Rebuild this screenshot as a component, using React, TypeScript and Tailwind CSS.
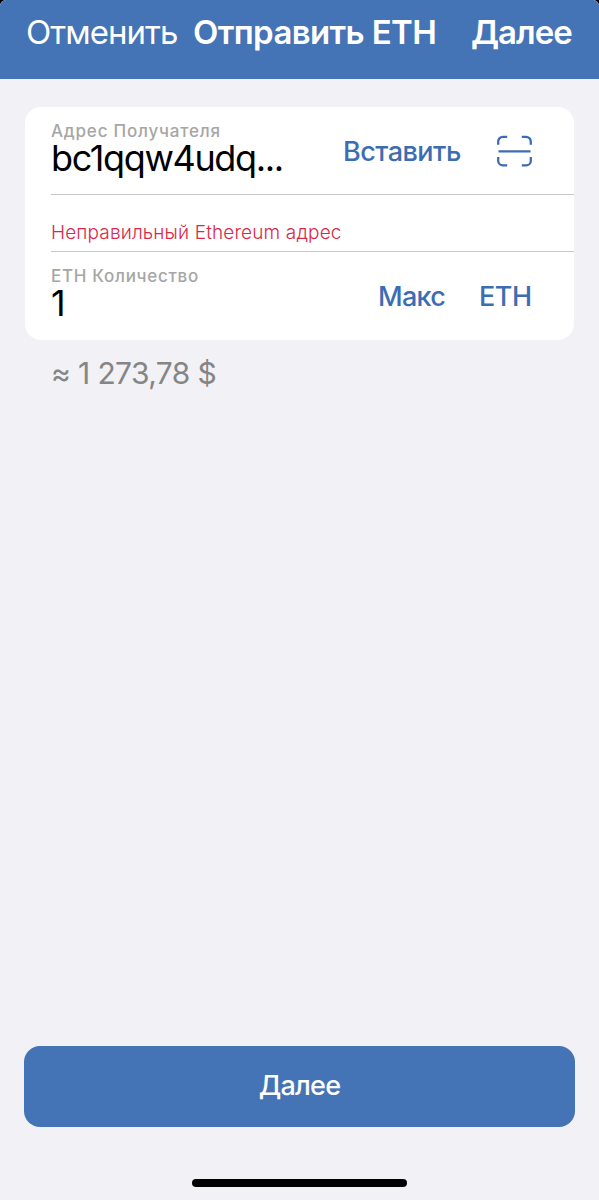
export default function App() {
  return (
    <div className="h-[1200px] w-[599px] overflow-hidden bg-black font-['Inter',sans-serif]">
      <div className="flex h-full flex-col overflow-hidden rounded-t-[6px] bg-[#f1f1f6]">
        <header className="flex h-[79px] shrink-0 items-start bg-[#4473b6] pt-[11px] text-[33px] leading-[42px] whitespace-nowrap text-white">
          <button className="ml-[26px] w-[167px] text-left tracking-[-0.95px]">Отменить</button>
          <h1 className="w-[278px] font-semibold tracking-[-0.63px]">Отправить ETH</h1>
          <button className="text-left font-semibold tracking-[-1px]">Далее</button>
        </header>
        <section className="mt-7 ml-[25px] h-[233px] w-[549px] shrink-0 rounded-[16px] bg-white pl-[26px] whitespace-nowrap">
          <div className="flex h-[88px] border-b border-[#c8c8c9]">
            <div className="w-[292px] pt-[15px]">
              <div className="text-[17px] leading-[18px] font-medium tracking-[0.8px] text-[#a6a6a6]">Адрес Получателя</div>
              <div className="text-[36px] leading-[36px] tracking-[-1.35px] text-black">bc1qqw4udq...</div>
            </div>
            <button className="mt-[27px] h-9 w-[154px] text-left text-[27px] leading-9 font-medium tracking-[-0.5px] text-[#3c6db3]">Вставить</button>
            <svg className="mt-[28px] h-[32px] w-[35px] text-[#3c6db3]" viewBox="0 0 35 32" fill="none" stroke="currentColor" strokeWidth="2.3">
              <path d="M1.2 9.7V6.5a4.7 4.7 0 0 1 4.7-4.7h4.3M24.8 1.8h4.3a4.7 4.7 0 0 1 4.7 4.7v3.2M33.8 22v3.7a4.7 4.7 0 0 1-4.7 4.7h-4.3M10.2 30.4H5.9a4.7 4.7 0 0 1-4.7-4.7V22M1.5 16.3h32" />
            </svg>
          </div>
          <div className="h-[57px] border-b border-[#c8c8c9] pt-[26px] text-[19px] leading-6 font-light tracking-[0.14px] text-[#d92849]">Неправильный Ethereum адрес</div>
          <div className="flex">
            <div className="w-[327px] pt-[15px]">
              <div className="text-[17px] leading-[18px] font-medium tracking-[0.7px] text-[#a6a6a6]">ETH Количество</div>
              <div className="text-[36px] leading-[36px] text-black">1</div>
            </div>
            <button className="mt-[27px] h-9 w-[101px] text-left text-[27px] leading-9 font-medium tracking-[-0.7px] text-[#3c6db3]">Макс</button>
            <button className="mt-[27px] h-9 text-left text-[27px] leading-9 font-medium tracking-[-0.5px] text-[#3c6db3]">ETH</button>
          </div>
        </section>
        <p className="mt-[15px] ml-[51px] text-[30px] leading-9 tracking-[-0.63px] text-[#858585]">≈ 1 273,78 $</p>
        <button className="mt-auto ml-6 h-[81px] w-[551px] shrink-0 rounded-[16px] bg-[#4473b6] text-[27px] font-medium tracking-[-0.8px] text-white">Далее</button>
        <div className="mt-[52px] mb-[13px] ml-[192px] h-[8px] w-[215px] shrink-0 rounded-full bg-black" />
      </div>
    </div>
  );
}
